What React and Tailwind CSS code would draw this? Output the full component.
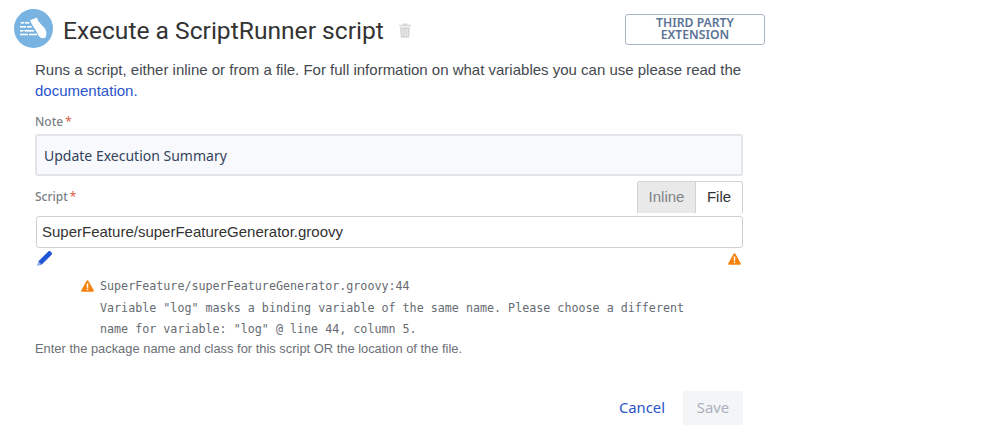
const sans = "font-['Noto_Sans',sans-serif]";
const arial = "font-['Liberation_Sans',Arial,sans-serif]";

function Warn({ className }) {
  return (
    <svg viewBox="0 0 14 13" className={className} aria-hidden="true">
      <path d="M7 0.4c.5 0 .9.3 1.1.7l5.6 10c.4.7-.1 1.6-1 1.6H1.3c-.9 0-1.4-.9-1-1.6l5.6-10C6.100.7 6.500.4 7 .4z" fill="#f5820d" />
      <rect x="6.200" y="3.800" width="1.600" height="4.700" fill="#fff" />
      <rect x="6.200" y="9.400" width="1.600" height="1.600" fill="#fff" />
    </svg>
  );
}

function Logo() {
  return (
    <svg viewBox="0 0 39 39" className="w-[39px] h-[39px] shrink-0" aria-hidden="true">
      <circle cx="19.500" cy="19.500" r="19.500" fill="#78b3e2" />
      <path d="M16 11.200L23 8.600c.5 2.900 2 4.700 4.200 6.900 2.200 2.200 4.600 4.300 5.100 7.200.3 1.800 0 4.200-.8 5.800-1.700.9-3.900.9-5.200 0-1.800-1.300-2.500-3.500-3.600-5.500C21 19.500 18 16.200 16 11.200z" fill="#fff" />
      <g fill="#fff">
        <rect x="6.700" y="13" width="3.500" height="1.600" />
        <rect x="11" y="13" width="4.300" height="1.600" />
        <rect x="6" y="17" width="6" height="1.600" />
        <rect x="13" y="17" width="4.700" height="1.600" />
        <rect x="6" y="21" width="3.500" height="1.600" />
        <rect x="10.500" y="21" width="9.500" height="1.600" />
        <rect x="6" y="24.700" width="8" height="1.600" />
        <rect x="15" y="24.700" width="8" height="1.600" />
      </g>
    </svg>
  );
}

function Trash() {
  return (
    <svg viewBox="0 0 12 15" className="w-[12px] h-[15px] shrink-0" aria-hidden="true">
      <path d="M4 0.500h4l.6 1.200H12v1.500H0V1.700h3.400z" fill="#d6d6d6" />
      <path d="M1 4.200h10l-.7 9.600c0 .6-.5 1-1 1H2.700c-.5 0-1-.4-1-1z" fill="#d6d6d6" />
      <path d="M3.700 6v7M6 6v7M8.300 6v7" stroke="#ececec" strokeWidth="0.900" />
    </svg>
  );
}

function Pencil() {
  return (
    <svg viewBox="0 0 16 16" className="w-[16px] h-[16px]" aria-hidden="true">
      <path d="M0.500 15.500l1-4.300L11.300 1.400c.6-.6 1.500-.6 2.100 0l1.200 1.200c.6.600.6 1.500 0 2.100L4.800 14.500z" fill="#1f55d6" />
      <path d="M0.500 15.500l1-4.300 3.300 3.300z" fill="#8fa6e8" />
    </svg>
  );
}

export default function App() {
  return (
    <div className="w-[998px] h-[448px] bg-white overflow-hidden">
      <div className="w-[765px] pl-[14px] pt-[9px] flex items-start">
        <Logo />
        <h1 className="font-['Roboto',sans-serif] ml-[10px] text-[24.600px] leading-[44px] text-[#333333] whitespace-nowrap">
          Execute a ScriptRunner script
        </h1>
        <div className="ml-[15px] mt-[14px]"><Trash /></div>
        <div className={`${sans} ml-auto mt-[5px] w-[140px] h-[31px] pb-[2px] border border-[#a9b4c6] rounded-[3px] flex items-center justify-center text-center text-[12.200px] leading-[12px] font-semibold text-[#5a7396]`}>
          THIRD PARTY<br />EXTENSION
        </div>
      </div>

      <div className="w-[743px] pl-[35px]">
        <p className={`${arial} mt-[6px] text-[15px] leading-[21px] text-[#444950]`}>
          Runs a script, either inline or from a file. For full information on what variables you can use please read the{" "}
          <span className="text-[#2a55c9]">documentation.</span>
        </p>

        <div className={`${sans} mt-[12px] text-[12px] leading-[18px] font-medium text-[#7a7f87]`}>
          Note<span className="text-[#dc6a50] ml-[2px]">*</span>
        </div>
        <div className={`${sans} mt-[3px] h-[42px] bg-[#f8f9fc] border-2 border-[#e3e5ea] rounded-[3px] flex items-center pl-[7px] text-[14px] text-[#33435c]`}>
          Update Execution Summary
        </div>

        <div className="mt-[5px] h-[32px] flex items-start justify-between">
          <div className={`${sans} mt-[7px] text-[12px] leading-[18px] font-medium text-[#7a7f87]`}>
            Script<span className="text-[#dc6a50] ml-[2px]">*</span>
          </div>
          <div className={`${arial} flex h-[32px] border border-b-0 border-[#d2d2d2] rounded-t-[3px] text-[15px]`}>
            <div className="w-[58px] bg-[#e9e9e9] border-r border-[#d2d2d2] text-[#7d8288] flex items-center justify-center rounded-tl-[3px]">Inline</div>
            <div className="w-[46px] text-[#333333] flex items-center justify-center">File</div>
          </div>
        </div>
        <div className={`${arial} mt-[3px] ml-[1px] h-[32px] border border-[#cfcfcf] rounded-[3px] flex items-center pl-[5px] text-[15px] text-[#333333]`}>
          SuperFeature/superFeatureGenerator.groovy
        </div>

        <div className="h-[18px] mt-[2px] flex items-start justify-between pl-[2px] pr-[2px]">
          <Pencil />
          <Warn className="w-[13px] h-[12px] mt-[3px]" />
        </div>

        <div className="mt-[8px] pl-[46px] flex items-start">
          <Warn className="w-[13px] h-[12px] mt-[4px] shrink-0" />
          <div className="ml-[6px] font-['DejaVu_Sans_Mono',monospace] text-[11.700px] leading-[21.500px] text-[#666b72] whitespace-nowrap">
            <div>SuperFeature/superFeatureGenerator.groovy:44</div>
            <div>Variable "log" masks a binding variable of the same name. Please choose a different</div>
            <div>name for variable: "log" @ line 44, column 5.</div>
          </div>
        </div>

        <p className={`${arial} text-[12.900px] leading-[20px] mt-[-2px] text-[#6b6f76]`}>
          Enter the package name and class for this script OR the location of the file.
        </p>

        <div className="mt-[32px] flex items-center justify-end">
          <span className={`${sans} text-[14.800px] text-[#2a55c9] mr-[18px]`}>Cancel</span>
          <div className={`${sans} w-[60px] h-[34px] bg-[#f4f5f7] rounded-[3px] flex items-center justify-center text-[14.800px] text-[#a9b0bd]`}>Save</div>
        </div>
      </div>
    </div>
  );
}
